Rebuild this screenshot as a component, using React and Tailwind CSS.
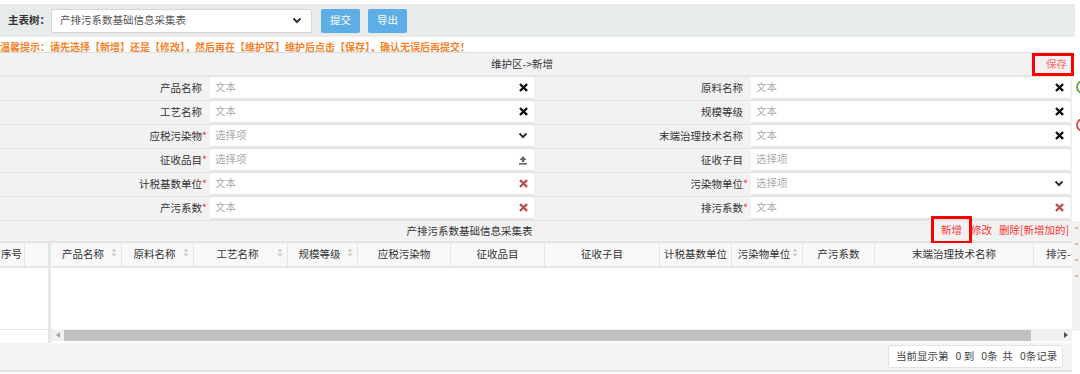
import React from 'react';

const XIcon = ({ color = '#111' }) => (
  <svg width="9" height="9" viewBox="0 0 10 10">
    <path d="M2 2L8 8M8 2L2 8" stroke={color} strokeWidth="2.6" strokeLinecap="square" />
  </svg>
);

const ChevronIcon = () => (
  <svg width="10" height="7" viewBox="0 0 10 7">
    <path d="M1.5 1.5L5 5L8.5 1.5" stroke="#333" strokeWidth="2" fill="none" />
  </svg>
);

const UploadIcon = () => (
  <svg width="10" height="10" viewBox="0 0 10 10">
    <path d="M5 1L8.5 5H6.3V7H3.7V5H1.5Z" fill="#666" />
    <rect x="1" y="8" width="8" height="1.6" fill="#666" />
  </svg>
);

const SortIcon = () => (
  <svg width="6" height="9" viewBox="0 0 6 9">
    <path d="M3 0.5L5.5 3.5H0.5Z M3 8.5L5.5 5.5H0.5Z" fill="#c8c8c8" />
  </svg>
);

const icons = {
  x: <XIcon />,
  red: <XIcon color="#c0504d" />,
  down: <ChevronIcon />,
  up: <UploadIcon />,
  none: null,
};

const Field = ({ label, required, placeholder, icon, labelW }) => (
  <div className="flex flex-1 h-full">
    <div className={`${labelW} flex items-center justify-end pr-[3px] bg-[#f2f2f2]`}>
      <span>{label}</span>
      <span className={`text-[#f33] w-[5px] ${required ? '' : 'invisible'}`}>*</span>
    </div>
    <div className="flex-1 flex items-center justify-between bg-white border-b-2 border-[#e6e6e6] pl-[5px] pr-[6px] mr-[2px]">
      <span className="text-[#aaa]">{placeholder}</span>
      {icons[icon]}
    </div>
  </div>
);

const rows = [
  [
    { label: '产品名称', placeholder: '文本', icon: 'x' },
    { label: '原料名称', placeholder: '文本', icon: 'x' },
  ],
  [
    { label: '工艺名称', placeholder: '文本', icon: 'x' },
    { label: '规模等级', placeholder: '文本', icon: 'x' },
  ],
  [
    { label: '应税污染物', required: true, placeholder: '选择项', icon: 'down' },
    { label: '末端治理技术名称', placeholder: '文本', icon: 'x' },
  ],
  [
    { label: '征收品目', required: true, placeholder: '选择项', icon: 'up' },
    { label: '征收子目', placeholder: '选择项', icon: 'none' },
  ],
  [
    { label: '计税基数单位', required: true, placeholder: '文本', icon: 'red' },
    { label: '污染物单位', required: true, placeholder: '选择项', icon: 'down' },
  ],
  [
    { label: '产污系数', required: true, placeholder: '文本', icon: 'red' },
    { label: '排污系数', required: true, placeholder: '文本', icon: 'red' },
  ],
];

const columns = [
  { name: '产品名称', w: 'w-[71px]', sort: true },
  { name: '原料名称', w: 'w-[72px]', sort: true },
  { name: '工艺名称', w: 'w-[94px]', sort: true },
  { name: '规模等级', w: 'w-[70px]', sort: true },
  { name: '应税污染物', w: 'w-[93px]' },
  { name: '征收品目', w: 'w-[94px]' },
  { name: '征收子目', w: 'w-[115px]' },
  { name: '计税基数单位', w: 'w-[72px]' },
  { name: '污染物单位', w: 'w-[71px]', sort: true },
  { name: '产污系数', w: 'w-[72px]' },
  { name: '末端治理技术名称', w: 'w-[159px]' },
];

export default function App() {
  return (
    <div className="w-[1080px] h-[374px] overflow-hidden bg-white text-[#333] text-[10.5px] leading-none font-['Noto_Sans_CJK_SC',sans-serif]">
      {/* toolbar */}
      <div className="mt-[4px] w-[1075px] h-[33px] bg-[#e8ebec] flex items-center">
        <span className="ml-[8px] font-bold w-[43px]">主表树：</span>
        <div className="w-[261px] h-[24px] bg-white border border-[#d6d6d6] rounded-[2px] flex items-center justify-between pl-[8px] pr-[9px] text-[#555]">
          <span>产排污系数基础信息采集表</span>
          <ChevronIcon />
        </div>
        <button className="ml-[9px] w-[39px] h-[24px] bg-[#5dade6] text-white rounded-[2px]">提交</button>
        <button className="ml-[8px] w-[39px] h-[24px] bg-[#5dade6] text-white rounded-[2px]">导出</button>
      </div>

      {/* tip */}
      <div className="h-[15px] pt-[4px] flex items-center text-[10px] font-bold text-[#f5822a] whitespace-nowrap">
        温馨提示：请先选择【新增】还是【修改】，然后再在【维护区】维护后点击【保存】，确认无误后再提交！
      </div>

      <div className="flex">
        <div className="w-[1072px] flex flex-col">
          {/* maintenance header */}
          <div className="h-[25px] bg-[#f2f2f2] border-t border-[#dcdcdc] border-b-2 border-b-[#e4e4e4] flex items-center">
            <div className="flex-1 text-center pl-[12px]">维护区-&gt;新增</div>
            <div className="w-[42px] h-[23px] -mr-[2px] border-[3px] border-[#ff0000] flex items-center justify-end pr-[4px] text-[#f66]">保存</div>
          </div>

          {/* form rows */}
          {rows.map((r, i) => (
            <div key={i} className="flex h-[24px] border-b border-[#e2e2e2] bg-[#f2f2f2]">
              <Field {...r[0]} labelW="w-[210px]" />
              <Field {...r[1]} labelW="w-[215px]" />
            </div>
          ))}

          {/* table title */}
          <div className="h-[22px] bg-[#f2f2f2] border-b-2 border-[#e4e4e4] flex items-center">
            <div className="flex-1 text-center pl-[8px]">产排污系数基础信息采集表</div>
            <div className="flex items-center h-[28px] -mt-[2px] text-[#f33]">
              <span className="h-full flex items-center border-[3px] border-[#ff0000] px-[7px]">新增</span>
              <span className="-ml-[1px]">修改</span>
              <span className="ml-[7px] mr-[3px]">删除[新增加的]</span>
            </div>
          </div>

          {/* grid */}
          <div className="flex h-[100px]">
            <div className="w-[51px] flex flex-col border-r-[3px] border-[#e6e6e6]">
              <div className="h-[25px] flex bg-[#f8f8f8] border-b-2 border-[#e6e6e6]">
                <div className="w-[25px] flex items-center pl-[1px] border-r border-[#e3e3e3]">序号</div>
                <div className="flex-1" />
              </div>
              <div className="h-[62px] bg-white border-b border-[#e3e3e3]" />
              <div className="flex-1 bg-white" />
            </div>
            <div className="flex-1 flex flex-col overflow-hidden">
              <div className="h-[25px] flex bg-[#f8f8f8] border-b-2 border-[#e6e6e6]">
                {columns.map((c) => (
                  <div key={c.name} className={`${c.w} shrink-0 flex items-center border-r border-[#e3e3e3]`}>
                    <span className={`flex-1 text-center ${c.sort ? 'pl-[4px]' : ''}`}>{c.name}</span>
                    {c.sort && (
                      <span className="mr-[4px] -mt-[4px]"><SortIcon /></span>
                    )}
                  </div>
                ))}
                <div className="flex-1 flex items-center pl-[12px] whitespace-nowrap">排污-</div>
              </div>
              <div className="h-[61px] bg-white" />
              <div className="h-[12px] bg-[#f1f1f1] flex items-center">
                <div className="w-[13px] flex items-center justify-center">
                  <svg width="4" height="6" viewBox="0 0 4 6"><path d="M4 0V6L0 3Z" fill="#a3a3a3" /></svg>
                </div>
                <div className="w-[967px] h-[11px] bg-[#c1c1c1]" />
                <div className="flex-1 flex items-center justify-end pr-[4px]">
                  <svg width="4" height="6" viewBox="0 0 4 6"><path d="M0 0V6L4 3Z" fill="#505050" /></svg>
                </div>
              </div>
            </div>
          </div>

          {/* footer */}
          <div className="h-[29px] bg-[#f5f5f5] border-b-2 border-[#e2e2e2] flex items-center justify-end pr-[9px]">
            <div className="h-[23px] w-[175px] bg-white border border-[#e2e2e2] rounded-[2px] flex items-center pl-[7px] whitespace-pre text-[#444]">
              当前显示第   0 到   0条  共   0条记录
            </div>
          </div>
        </div>

        {/* side strip */}
        <div className="w-[8px] overflow-hidden flex flex-col">
          <div className="h-[25px]" />
          <div className="h-[144px] bg-white flex flex-col">
            <div className="mt-[3px] ml-[4px] w-[14px] h-[14px] rounded-full border-2 border-[#6ab04c]" />
            <div className="mt-[24px] ml-[4px] w-[14px] h-[14px] rounded-full border-2 border-[#d9534f]" />
          </div>
          <div className="h-[110px] bg-[#f2f2f2] flex flex-col gap-[14px] pt-[6px] pl-[3px]">
            <div className="w-[3px] h-[2px] bg-[#e8b48a]" />
            <div className="w-[3px] h-[2px] bg-[#e8b48a]" />
            <div className="w-[3px] h-[2px] bg-[#e8b48a]" />
            <div className="w-[3px] h-[2px] bg-[#e8b48a]" />
          </div>
        </div>
      </div>
    </div>
  );
}
